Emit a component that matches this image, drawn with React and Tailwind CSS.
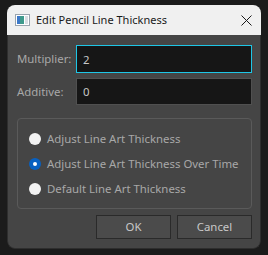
import { useState } from "react";

const font = { fontFamily: '"Segoe UI", "Noto Sans", "Open Sans", sans-serif' };

const options = [
  "Adjust Line Art Thickness",
  "Adjust Line Art Thickness Over Time",
  "Default Line Art Thickness",
];

const Radio = ({ checked }) =>
  checked ? (
    <span className="flex h-[12px] w-[12px] items-center justify-center rounded-full bg-[#0860c0]">
      <span className="h-[4px] w-[4px] rounded-full bg-white" />
    </span>
  ) : (
    <span className="h-[12px] w-[12px] rounded-full bg-[#f2f2f2]" />
  );

const App = () => {
  const [mode, setMode] = useState(1);

  return (
    <div className="h-[255px] w-[268px] bg-[#1b1b1b] px-[7px] pt-[5px]" style={font}>
      <div className="flex h-[244px] w-[254px] flex-col overflow-hidden rounded-[8px]">
        <div className="flex h-[30px] shrink-0 items-center bg-[#f0f0f0] pl-[8px] pr-[8px]">
          <svg width="15" height="12" viewBox="0 0 15 12" className="mr-[6px]">
            <rect x="0.5" y="0.5" width="14" height="11" fill="#fff" stroke="#9aa4ae" />
            <rect x="2" y="2" width="7" height="8" fill="#3f9a8c" />
            <rect x="2" y="2" width="3" height="8" fill="#3c78c8" />
            <rect x="10" y="2" width="3" height="8" fill="#d8dde2" />
          </svg>
          <span className="flex-1 text-[11px] text-[#1a1a1a]">Edit Pencil Line Thickness</span>
          <svg width="11" height="11" viewBox="0 0 11 11" className="mr-[1px]">
            <path d="M0.5 0.5 L10.5 10.5 M10.5 0.5 L0.5 10.5" stroke="#1a1a1a" strokeWidth="1" />
          </svg>
        </div>

        <div className="flex flex-1 flex-col rounded-b-[8px] border-x border-b border-[#2e2e2e] bg-[#454545] pl-[9px] pr-[8px] pt-[10px] text-[11.4px]">
          <div className="flex items-center">
            <span className="w-[59px] shrink-0 text-[#a8a8a8]">Multiplier:</span>
            <input
              defaultValue="2"
              className="h-[28px] w-0 min-w-0 flex-1 border border-[#1ec6e6] bg-[#161616] px-[6px] text-[#c8c8c8] outline-none"
            />
          </div>
          <div className="mt-[5px] flex items-center">
            <span className="w-[59px] shrink-0 text-[#a8a8a8]">Additive:</span>
            <input
              defaultValue="0"
              className="h-[27px] w-0 min-w-0 flex-1 border border-[#505050] bg-[#161616] px-[6px] text-[#c8c8c8] outline-none"
            />
          </div>

          <div className="mt-[13px] flex h-[91px] flex-col gap-[13px] rounded-[4px] border border-[#5a5a5a] pl-[11px] pt-[14px]">
            {options.map((label, i) => (
              <label key={label} className="flex h-[12px] cursor-pointer items-center gap-[6px]" onClick={() => setMode(i)}>
                <Radio checked={mode === i} />
                <span className="text-[#a8a8a8]">{label}</span>
              </label>
            ))}
          </div>

          <div className="mt-[6px] flex justify-end gap-[6px]">
            <button className="h-[24px] w-[75px] border border-[#2a2a2a] bg-[#4b4b4b] text-[#c8c8c8]">OK</button>
            <button className="h-[24px] w-[75px] border border-[#2a2a2a] bg-[#4b4b4b] text-[#c8c8c8]">Cancel</button>
          </div>
        </div>
      </div>
    </div>
  );
};

export default App;
